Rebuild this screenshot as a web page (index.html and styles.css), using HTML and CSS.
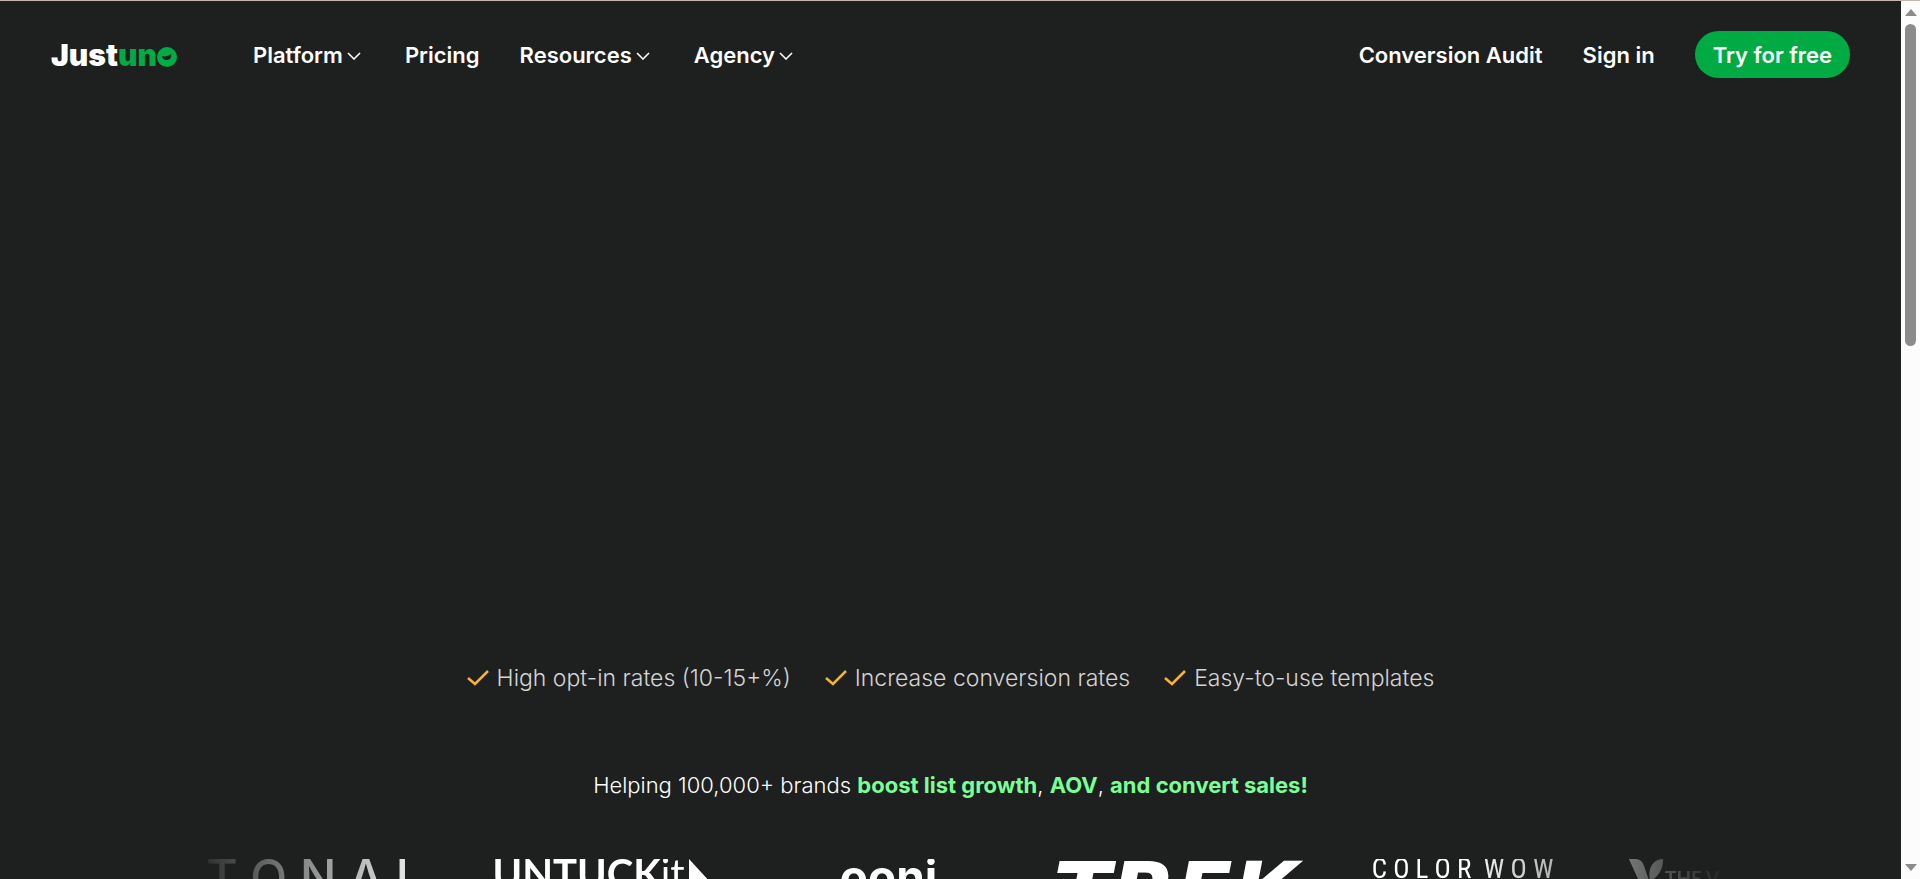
FILE: index.html
```html
<!DOCTYPE html>
<html lang="en">
<head>
    <meta charset="UTF-8">
    <meta name="viewport" content="width=device-width, initial-scale=1.0">
    <title>Justuno</title>
    <link rel="stylesheet" href="styles.css">
</head>
<body>
    <div class="page">
        <header class="header">
            <a class="logo" href="#">Just<span class="logo-green">un<span class="logo-o">o<svg viewBox="0 0 20 20"><circle cx="10" cy="10" r="10" fill="#00ab44"/><path d="M5 9c3 1 6 0 9-2 1 3-1 6-4 6-3 0-5-2-5-4z" fill="#1e201f"/></svg></span></span></a>
            <nav class="nav">
                <button class="nav-item">Platform<svg class="chevron" viewBox="0 0 14 8"><path d="M1 1l6 6 6-6"/></svg></button>
                <a class="nav-item" href="#">Pricing</a>
                <button class="nav-item">Resources<svg class="chevron" viewBox="0 0 14 8"><path d="M1 1l6 6 6-6"/></svg></button>
                <button class="nav-item">Agency<svg class="chevron" viewBox="0 0 14 8"><path d="M1 1l6 6 6-6"/></svg></button>
            </nav>
            <div class="actions">
                <a class="nav-item" href="#">Conversion Audit</a>
                <a class="nav-item" href="#">Sign in</a>
                <a class="nav-item try-button" href="#">Try for free</a>
            </div>
        </header>

        <main>
            <section class="hero">
                <ul class="benefits">
                    <li><svg class="check" viewBox="0 0 22 16"><path d="M1 8l7 6L21 1"/></svg>High opt-in rates (10-15+%)</li>
                    <li><svg class="check" viewBox="0 0 22 16"><path d="M1 8l7 6L21 1"/></svg>Increase conversion rates</li>
                    <li><svg class="check" viewBox="0 0 22 16"><path d="M1 8l7 6L21 1"/></svg>Easy-to-use templates</li>
                </ul>
            </section>

            <section class="brands">
                <p class="tagline">Helping 100,000+ brands <strong>boost list growth</strong>, <strong>AOV</strong>, <strong>and convert sales!</strong></p>
                <div class="brand-row">
                    <span class="brand tonal">T O N A L</span>
                    <span class="brand untuckit">UNTUCK<span class="thin">it</span><svg viewBox="0 0 22 24"><path d="M0 0l22 24H0z" fill="#fff"/></svg></span>
                    <span class="brand ooni">ooni</span>
                    <span class="brand trek">TREK</span>
                    <span class="brand colorwow">C O L O R &nbsp;W O W</span>
                    <span class="brand vitamin"><svg viewBox="0 0 38 40"><path d="M0 0h8c5 0 8 4 10 11l5 15-3 9h-4zM38 0c0 12-5 19-14 25-4-13 2-25 14-25z" fill="#fff"/></svg>THE V</span>
                </div>
            </section>
        </main>
    </div>

    <div class="scrollbar">
        <span class="arrow up"></span>
        <span class="thumb"></span>
        <span class="arrow down"></span>
    </div>
</body>
</html>
```

FILE: styles.css
```css
* {
    box-sizing: border-box;
}
body {
    margin: 0;
    height: 100vh;
    overflow: hidden;
    display: flex;
    background-color: #1e201f;
    color: #fff;
    font-family: Inter, sans-serif;
    border-top: 1px solid #c4b5b0;
}
.page {
    flex: 1;
    min-width: 0;
    overflow: hidden;
}

/* header */
.header {
    display: flex;
    align-items: center;
    padding: 30px 51px;
}
.logo {
    width: 202px;
    color: #fff;
    font-size: 30px;
    font-weight: 900;
    line-height: 40px;
    text-decoration: none;
}
.logo-green {
    color: #00ab44;
}
.logo-o {
    position: relative;
}
.logo-o svg {
    position: absolute;
    left: 0;
    bottom: 6px;
    width: 20px;
    height: 20px;
}
.nav,
.actions {
    display: flex;
    align-items: center;
    gap: 40px;
}
.actions {
    margin-left: auto;
}
.nav-item {
    display: flex;
    align-items: center;
    padding: 2px 0 0;
    border: none;
    background: none;
    color: #fff;
    font-family: inherit;
    font-size: 22px;
    font-weight: 600;
    line-height: 45px;
    text-decoration: none;
    white-space: nowrap;
    cursor: pointer;
}
.chevron {
    width: 14px;
    height: 8px;
    margin: 0 4px;
}
.chevron path,
.check path {
    fill: none;
    stroke: #fff;
    stroke-width: 1.6;
}
.try-button {
    padding: 2px 18px 0;
    border-radius: 24px;
    background-color: #00ab44;
}

/* hero */
.hero {
    display: flex;
    flex-direction: column;
    justify-content: flex-end;
    min-height: 586px;
}
.benefits {
    display: flex;
    justify-content: center;
    gap: 34px;
    margin: 0;
    padding: 0;
    list-style: none;
    font-size: 23px;
    font-weight: 300;
    line-height: 32px;
    color: #d4d4d4;
}
.benefits li {
    display: flex;
    align-items: center;
    gap: 8px;
}
.check {
    width: 22px;
    height: 16px;
}
.check path {
    stroke: #f9b233;
    stroke-width: 2.5;
}

/* brands */
.brands {
    padding-top: 75px;
}
.tagline {
    margin: 0 0 58px;
    font-size: 22px;
    font-weight: 300;
    line-height: 32px;
    text-align: center;
}
.tagline strong {
    font-weight: 700;
    color: #7aff97;
}
.brand-row {
    display: grid;
    grid-template-columns: repeat(6, 287px);
    justify-items: center;
    align-items: start;
    margin: 0 9%;
    overflow: hidden;
    -webkit-mask-image: linear-gradient(to right, transparent 1%, #000 17%, #000 83%, transparent);
    mask-image: linear-gradient(to right, transparent 1%, #000 17%, #000 83%, transparent);
}
.brand {
    display: flex;
    white-space: nowrap;
}
.tonal {
    font-size: 48px;
    font-weight: 500;
    line-height: 36px;
}
.untuckit {
    font-family: Lato, sans-serif;
    font-size: 40px;
    font-weight: 700;
    line-height: 28px;
}
.untuckit .thin {
    font-weight: 400;
}
.untuckit svg {
    width: 22px;
    height: 24px;
    margin-left: 4px;
}
.ooni {
    font-size: 46px;
    font-weight: 700;
    line-height: 34px;
}
.trek {
    font-family: "DejaVu Sans", sans-serif;
    font-size: 84px;
    font-style: italic;
    font-weight: 700;
    line-height: 68px;
}
.colorwow {
    font-family: "Liberation Sans Narrow", "Roboto Condensed", Roboto, sans-serif;
    font-size: 27px;
    line-height: 20px;
}
.vitamin {
    align-items: center;
    width: 245px;
    font-family: Lato, sans-serif;
    font-size: 19px;
    font-weight: 700;
}
.vitamin svg {
    width: 38px;
    height: 36px;
}

/* scrollbar */
.scrollbar {
    display: flex;
    flex-direction: column;
    align-items: center;
    width: 19px;
    padding: 8px 0;
    background-color: #fcfcfc;
}
.arrow {
    border: 6px solid transparent;
}
.arrow.up {
    border-top: none;
    border-bottom: 7px solid #8b8b8b;
}
.arrow.down {
    border-bottom: none;
    border-top: 7px solid #8b8b8b;
    margin-top: auto;
}
.thumb {
    width: 11px;
    height: 322px;
    margin-top: 8px;
    border-radius: 6px;
    background-color: #8b8b8b;
}
```
